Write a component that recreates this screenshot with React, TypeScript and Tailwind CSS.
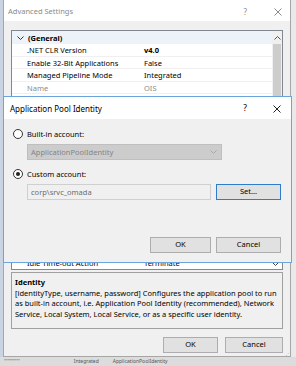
import React from "react"

const rows = [
  { name: ".NET CLR Version", value: "v4.0", bold: true },
  { name: "Enable 32-Bit Applications", value: "False" },
  { name: "Managed Pipeline Mode", value: "Integrated" },
  { name: "Name", value: "OIS", muted: true },
]

function Radio({ checked }: { checked?: boolean }) {
  return (
    <span className="w-[10px] h-[10px] rounded-full border border-[#333] bg-white flex items-center justify-center shrink-0">
      {checked && <span className="w-[4px] h-[4px] rounded-full bg-[#222]" />}
    </span>
  )
}

function Chevron({ className = "" }: { className?: string }) {
  return (
    <svg width="7" height="4" viewBox="0 0 7 4" className={className}>
      <path d="M0.5 0.5 L3.5 3.5 L6.5 0.5" fill="none" stroke="currentColor" strokeWidth="1" />
    </svg>
  )
}

function CloseX({ className = "" }: { className?: string }) {
  return (
    <svg width="8" height="8" viewBox="0 0 8 8" className={className}>
      <path d="M0.5 0.5 L7.5 7.5 M7.5 0.5 L0.5 7.5" stroke="currentColor" strokeWidth="1" />
    </svg>
  )
}

function Button({ label, w, primary }: { label: string; w: string; primary?: boolean }) {
  return (
    <div
      className={`${w} h-[16px] flex items-center justify-center bg-[#e1e1e1] border ${
        primary ? "border-[#2f7ccb]" : "border-[#adadad]"
      }`}
    >
      {label}
    </div>
  )
}

function OuterWindow() {
  return (
    <div className="w-[288px] flex flex-col border-x border-b border-[#a6a6a6] bg-[#f0f0f0]">
      {/* title bar, inactive */}
      <div className="h-[22px] bg-white flex items-center pl-[4px] pt-[3px] text-[#8a8a8a]">
        <span>Advanced Settings</span>
        <span className="ml-auto mr-[27px] text-[8px]">?</span>
        <CloseX className="mr-[8px] text-[#8a8a8a]" />
      </div>

      <div className="flex flex-col px-[7px] pt-[9px]">
        {/* property grid */}
        <div className="h-[240px] border border-[#828790] bg-white flex flex-col">
          <div className="h-[227px] flex overflow-hidden">
            <div className="flex-1 flex flex-col">
              <div className="h-[13px] shrink-0 bg-[#eef3fa] flex items-center">
                <Chevron className="ml-[5px] text-[#333]" />
                <span className="ml-[4px] font-bold relative top-[1px]">(General)</span>
              </div>
              {rows.map((r) => (
                <div
                  key={r.name}
                  className={`h-[12.5px] shrink-0 flex items-center border-b border-[#f0f0f0] ${
                    r.muted ? "text-[#8c8c8c]" : ""
                  }`}
                >
                  <span className="ml-[15px] w-[117px] relative top-[1px]">{r.name}</span>
                  <span className={`relative top-[1px] ${r.bold ? "font-bold" : ""}`}>{r.value}</span>
                </div>
              ))}
              <div className="h-[12.5px] shrink-0 border-b border-[#f0f0f0]" />
            </div>
            {/* scrollbar */}
            <div className="w-[10px] bg-[#f0f0f0] flex flex-col">
              <div className="h-[13px] flex items-center justify-center text-[#555]">
                <Chevron className="rotate-180" />
              </div>
              <div className="flex-1 bg-[#cdcdcd] mx-[1px]" />
            </div>
          </div>
          <div className="h-[11px] flex items-center border-t border-[#e5e5e5]">
            <span className="ml-[15px] w-[117px]">Idle Time-out Action</span>
            <span>Terminate</span>
            <Chevron className="ml-auto mr-[3px] text-[#444]" />
          </div>
        </div>

        {/* description */}
        <div className="mt-[2px] h-[57px] border border-[#a0a0a0] px-[3px] pt-[4px] leading-[10.5px]">
          <div className="font-bold">Identity</div>
          <div>[identityType, username, password] Configures the application pool to run</div>
          <div>as built-in account, i.e. Application Pool Identity (recommended), Network</div>
          <div>Service, Local System, Local Service, or as a specific user identity.</div>
        </div>

        <div className="mt-[8px] flex justify-end gap-[7px]">
          <Button label="OK" w="w-[55px]" />
          <Button label="Cancel" w="w-[58px]" />
        </div>
        <div className="h-[3px] flex justify-end">
          <span className="text-[5px] text-[#aaa] -mr-[6px] leading-none">⋰</span>
        </div>
      </div>
    </div>
  )
}

function PoolIdentityDialog() {
  return (
    <div className="absolute left-[3px] top-[96px] w-[289px] h-[167px] border border-[#6aa5dd] bg-[#f0f0f0] flex flex-col">
      <div className="h-[22px] bg-white flex items-center pl-[6px] pt-[1px] text-[8px]">
        <span>Application Pool Identity</span>
        <span className="ml-auto mr-[26px] text-[8.5px]">?</span>
        <CloseX className="mr-[10px] text-[#222]" />
      </div>
      <div className="flex flex-col pl-[9px] pr-[10px]">
        <div className="mt-[10px] h-[10px] flex items-center gap-[4px]">
          <Radio />
          <span className="relative top-[1px]">Built-in account:</span>
        </div>
        <div className="mt-[5px] ml-[14px] w-[195px] h-[16px] bg-[#cccccc] border border-[#bfbfbf] flex items-center pl-[3px] text-[#848484]">
          <span className="relative top-[1px]">ApplicationPoolIdentity</span>
          <Chevron className="ml-auto mr-[4px] text-[#a8a8a8]" />
        </div>
        <div className="mt-[9px] h-[10px] flex items-center gap-[4px]">
          <Radio checked />
          <span className="relative top-[1px]">Custom account:</span>
        </div>
        <div className="mt-[5px] ml-[14px] flex items-center">
          <div className="w-[184px] h-[16px] border border-[#cfcfcf] flex items-center pl-[3px] text-[#6d6d6d]">
            <span className="relative top-[1px]">corp\srvc_omada</span>
          </div>
          <div className="ml-auto">
            <Button label="Set..." w="w-[65px]" primary />
          </div>
        </div>
        <div className="mt-[37px] flex justify-end gap-[5px]">
          <Button label="OK" w="w-[61px]" />
          <Button label="Cancel" w="w-[65px]" />
        </div>
      </div>
    </div>
  )
}

export default function App() {
  return (
    <div className="w-[296px] h-[366px] overflow-hidden relative bg-[#e8e8e8] font-['Noto_Sans',sans-serif] text-[7.5px] leading-none text-black flex flex-col">
      <div className="flex h-[357px]">
        <div className="w-[3px] bg-[#c9d3e2]" />
        <OuterWindow />
        <div className="flex-1 bg-[#e9e9e9]" />
      </div>
      <div className="flex-1 bg-[#dcdcdc] flex items-center gap-[14px] pl-[4px] text-[5px] text-[#555]">
        <span>''''''''''''''</span>
        <span className="ml-[40px]">Integrated</span>
        <span>ApplicationPoolIdentity</span>
      </div>
      <PoolIdentityDialog />
    </div>
  )
}
